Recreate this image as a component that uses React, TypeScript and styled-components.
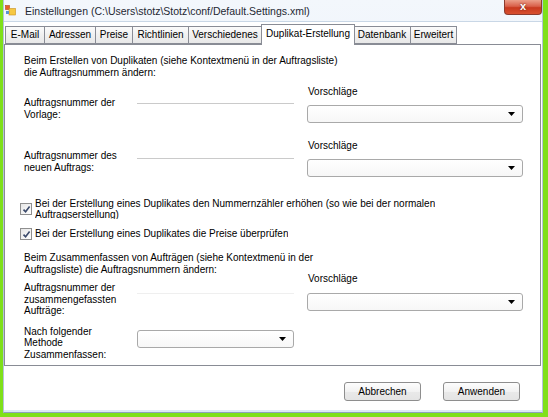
import React from "react";
import styled, { createGlobalStyle } from "styled-components";

const GlobalStyle = createGlobalStyle`
  html, body {
    margin: 0;
    padding: 0;
    background: #7fe01a;
  }
  body {
    font-family: "Liberation Sans", Arial, sans-serif;
    color: #000;
  }
`;

const tabs = [
  { label: "E-Mail", width: 40 },
  { label: "Adressen", width: 52 },
  { label: "Preise", width: 38 },
  { label: "Richtlinien", width: 57 },
  { label: "Verschiedenes", width: 74 },
  { label: "Duplikat-Erstellung", width: 94, active: true },
  { label: "Datenbank", width: 58 },
  { label: "Erweitert", width: 47 },
];

const ArrowDown: React.FC = () => (
  <svg width="7" height="4" viewBox="0 0 7 4">
    <path d="M0 0 H7 L3.5 4 Z" fill="#000" />
  </svg>
);

const CheckMark: React.FC = () => (
  <svg width="9" height="9" viewBox="0 0 9 9">
    <path
      d="M1.5 4.6 L3.6 6.8 L7.6 1.6"
      fill="none"
      stroke="#3b4a6b"
      strokeWidth="1.6"
    />
  </svg>
);

const AppIcon: React.FC = () => (
  <svg width="11" height="11" viewBox="0 0 11 11">
    <rect x="0.5" y="0.5" width="4" height="4" fill="#e5622b" stroke="#b4431a" strokeWidth="0.6" />
    <rect x="4" y="3.5" width="6.5" height="6.5" fill="#f6c843" stroke="#c98f1d" strokeWidth="0.6" />
    <rect x="1" y="6" width="3" height="3" fill="#5a93d6" />
  </svg>
);

const Combo: React.FC<{ $mt?: number }> = ({ $mt }) => (
  <ComboBox $mt={$mt}>
    <ArrowDown />
  </ComboBox>
);

const CheckBox: React.FC = () => (
  <Box>
    <CheckMark />
  </Box>
);

const App: React.FC = () => {
  return (
    <Page>
      <GlobalStyle />
      <Window>
        <TitleBar>
          <AppIcon />
          <Title>Einstellungen (C:\Users\stotz\Stotz\conf/Default.Settings.xml)</Title>
          <CloseButton>x</CloseButton>
        </TitleBar>
        <Client>
          <TabStrip>
            {tabs.map((t) => (
              <Tab key={t.label} $w={t.width} $active={!!t.active}>
                {t.label}
              </Tab>
            ))}
          </TabStrip>
          <Panel>
            <Para>
              Beim Erstellen von Duplikaten (siehe Kontextmenü in der Auftragsliste)
              <br />
              die Auftragsnummern ändern:
            </Para>

            <NumberRow $mt={7}>
              <RowLabel $pt={11}>
                Auftragsnummer der
                <br />
                Vorlage:
              </RowLabel>
              <LineCell $pt={17}>
                <Rule />
              </LineCell>
              <RightCell>
                <Caption>Vorschläge</Caption>
                <Combo $mt={8} />
              </RightCell>
            </NumberRow>

            <NumberRow $mt={17}>
              <RowLabel $pt={10}>
                Auftragsnummer des
                <br />
                neuen Auftrags:
              </RowLabel>
              <LineCell $pt={18}>
                <Rule />
              </LineCell>
              <RightCell>
                <Caption>Vorschläge</Caption>
                <Combo $mt={8} />
              </RightCell>
            </NumberRow>

            <CheckRow $mt={22}>
              <CheckBox />
              <CheckLabel $clip={20}>
                Bei der Erstellung eines Duplikates den Nummernzähler erhöhen (so wie bei der normalen
                <br />
                Auftragserstellung)
              </CheckLabel>
            </CheckRow>

            <CheckRow $mt={9}>
              <CheckBox />
              <CheckLabel>Bei der Erstellung eines Duplikates die Preise überprüfen</CheckLabel>
            </CheckRow>

            <Para $mt={12}>
              Beim Zusammenfassen von Aufträgen (siehe Kontextmenü in der
              <br />
              Auftragsliste) die Auftragsnummern ändern:
            </Para>

            <NumberRow $mt={-3}>
              <RowLabel $pt={9}>
                Auftragsnummer der
                <br />
                zusammengefassten
                <br />
                Aufträge:
              </RowLabel>
              <LineCell $pt={20}>
                <Rule $faint />
              </LineCell>
              <RightCell>
                <Caption>Vorschläge</Caption>
                <Combo $mt={9} />
              </RightCell>
            </NumberRow>

            <NumberRow $mt={9}>
              <RowLabel $pt={0}>
                Nach folgender
                <br />
                Methode
                <br />
                Zusammenfassen:
              </RowLabel>
              <LineCell $pt={4}>
                <Combo />
              </LineCell>
            </NumberRow>
          </Panel>
          <ButtonBar>
            <Button>Abbrechen</Button>
            <Button>Anwenden</Button>
          </ButtonBar>
        </Client>
      </Window>
    </Page>
  );
};

// Styled Components
const Page = styled.div`
  width: 548px;
  height: 417px;
  box-sizing: border-box;
  padding: 0 5px 4px 3px;
  background: #7fe01a;
  display: flex;
`;

const Window = styled.div`
  flex: 1;
  display: flex;
  flex-direction: column;
  background: linear-gradient(to bottom, #f3f7fc, #dde8f5);
  border-left: 1px solid #b3c4d8;
  border-right: 1px solid #b3c4d8;
  border-bottom: 1px solid #8ea2bb;
`;

const TitleBar = styled.div`
  height: 21px;
  display: flex;
  align-items: center;
  padding-left: 1px;
  gap: 9px;
`;

const Title = styled.span`
  font-size: 10.5px;
  color: #1e2833;
  padding-top: 1px;
`;

const CloseButton = styled.div`
  margin-left: auto;
  margin-right: 0;
  align-self: flex-start;
  width: 38px;
  height: 15px;
  box-sizing: border-box;
  border: 1px solid #8c3b2e;
  border-top: none;
  border-radius: 0 0 4px 4px;
  background: linear-gradient(to bottom, #eb9f8a, #d9604a 45%, #c8391f 55%, #d8502f);
  color: #fff;
  font: bold 11px "Liberation Sans", Arial, sans-serif;
  text-align: center;
  line-height: 13px;
  text-shadow: 0 0 2px #5a1a10;
`;

const Client = styled.div`
  flex: 1;
  display: flex;
  flex-direction: column;
  background: #fff;
  border-top: 1px solid #c9d7e6;
  margin-bottom: 2px;
`;

const TabStrip = styled.div`
  height: 22px;
  display: flex;
  align-items: flex-end;
  padding-left: 1px;
  position: relative;
  z-index: 1;
`;

const Tab = styled.div<{ $w: number; $active: boolean }>`
  width: ${(p) => p.$w}px;
  height: ${(p) => (p.$active ? 21 : 18)}px;
  box-sizing: border-box;
  margin-left: -1px;
  margin-right: ${(p) => (p.$active ? -1 : 0)}px;
  margin-bottom: ${(p) => (p.$active ? -1 : 0)}px;
  border: 1px solid #898c95;
  border-bottom: ${(p) => (p.$active ? "none" : "1px solid #898c95")};
  background: ${(p) =>
    p.$active ? "#fff" : "linear-gradient(to bottom, #fbfbfb, #f0f0f0 50%, #e8e8e8)"};
  font-size: 10px;
  line-height: ${(p) => (p.$active ? 17 : 16)}px;
  text-align: center;
  white-space: nowrap;
  position: relative;
  z-index: ${(p) => (p.$active ? 2 : 1)};

  &:first-child {
    margin-left: 0;
  }
`;

const Panel = styled.div`
  height: 322px;
  box-sizing: border-box;
  margin-right: 1px;
  border: 1px solid #898c95;
  padding: 10px 0 0 19px;
  display: flex;
  flex-direction: column;
  font-size: 10px;
`;

const Para = styled.p<{ $mt?: number }>`
  margin: ${(p) => p.$mt ?? 0}px 0 0;
  line-height: 12px;
  white-space: nowrap;
`;

const NumberRow = styled.div<{ $mt: number }>`
  margin-top: ${(p) => p.$mt}px;
  display: grid;
  grid-template-columns: 113px 157px 229px;
  align-items: start;
`;

const RowLabel = styled.div<{ $pt: number }>`
  padding-top: ${(p) => p.$pt}px;
  line-height: 11.5px;
`;

const LineCell = styled.div<{ $pt: number }>`
  padding-top: ${(p) => p.$pt}px;
`;

const Rule = styled.div<{ $faint?: boolean }>`
  height: 1px;
  background: ${(p) => (p.$faint ? "#efefef" : "#cacaca")};
`;

const RightCell = styled.div`
  margin-left: 13px;
  display: flex;
  flex-direction: column;
`;

const Caption = styled.div`
  height: 11px;
  line-height: 11px;
  padding-left: 1px;
`;

const ComboBox = styled.div<{ $mt?: number }>`
  margin-top: ${(p) => p.$mt ?? 0}px;
  height: 18px;
  box-sizing: border-box;
  border: 1px solid #a9a9a9;
  border-radius: 3px;
  background: linear-gradient(to bottom, #ffffff, #f7f7f7);
  display: flex;
  align-items: center;
  justify-content: flex-end;
  padding-right: 7px;
`;

const CheckRow = styled.div<{ $mt: number }>`
  margin-top: ${(p) => p.$mt}px;
  margin-left: -4px;
  display: flex;
  align-items: center;
  gap: 3px;
`;

const Box = styled.div`
  width: 12px;
  height: 12px;
  flex: none;
  box-sizing: border-box;
  border: 1px solid #8f8f8f;
  background: linear-gradient(to bottom right, #e6e6e6, #ffffff);
  display: flex;
  align-items: center;
  justify-content: center;
`;

const CheckLabel = styled.div<{ $clip?: number }>`
  line-height: 10.5px;
  white-space: nowrap;
  overflow: hidden;
  ${(p) => (p.$clip ? `height: ${p.$clip}px;` : "")}
`;

const ButtonBar = styled.div`
  flex: 1;
  display: flex;
  justify-content: flex-end;
  align-items: flex-start;
  gap: 22px;
  padding: 16px 22px 0 0;
`;

const Button = styled.div`
  width: 77px;
  height: 19px;
  box-sizing: border-box;
  border: 1px solid #8e8e8e;
  border-radius: 3px;
  background: linear-gradient(to bottom, #fdfdfd, #f2f2f2 50%, #e9e9e9 51%, #e4e4e4);
  font-size: 10px;
  line-height: 17px;
  text-align: center;
`;

export default App;
